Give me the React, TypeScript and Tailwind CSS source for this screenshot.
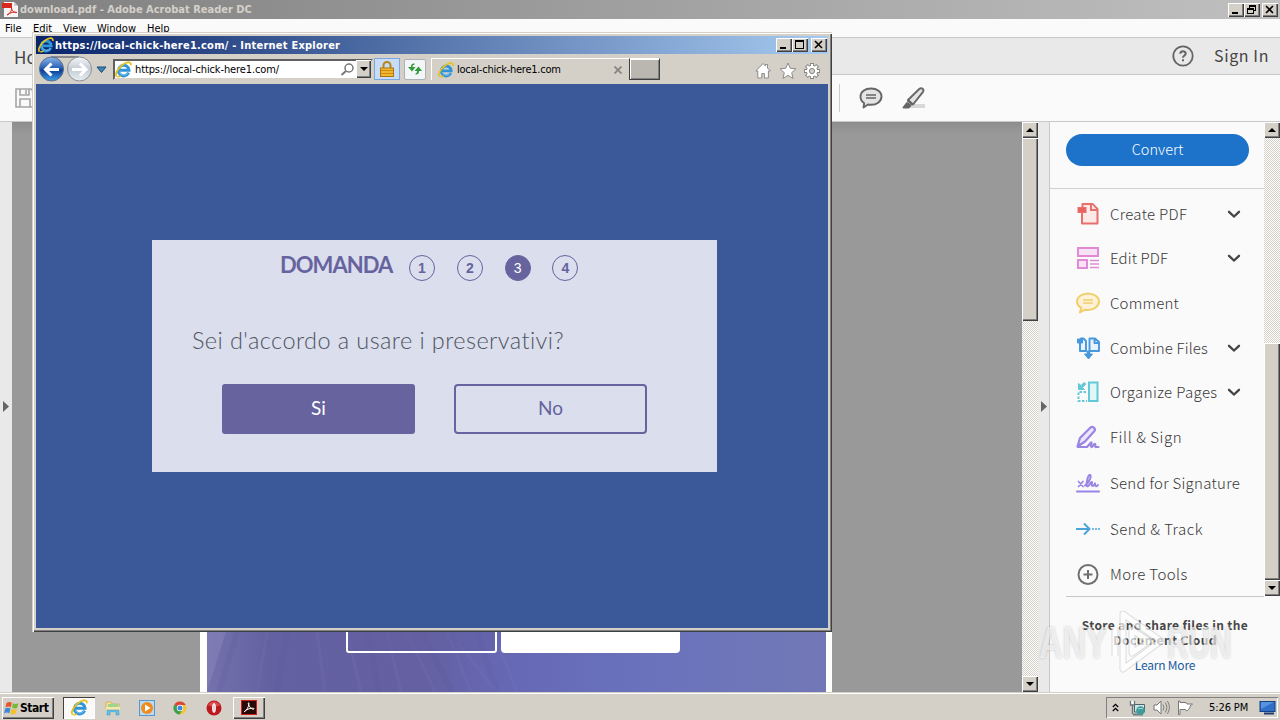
import React from "react";

const bevel =
  "bg-[#d4d0c8] shadow-[inset_1px_1px_0_#ffffff,inset_-1px_-1px_0_#404040,inset_-2px_-2px_0_#808080]";
const tahoma = "font-['DejaVu_Sans_Condensed','DejaVu_Sans',sans-serif] [font-stretch:condensed]";
const clean = "font-['Noto_Sans_CJK_SC','Noto_Sans',sans-serif]";

function IELogo({ size = 16 }: { size?: number }) {
  return (
    <svg width={size} height={size} viewBox="0 0 16 16" fill="none" className="shrink-0">
      <path d="M12.800 11A5 5 0 1 1 13.200 8.800H4.400" stroke="#2f94d8" strokeWidth="2.800" />
      <path d="M12.400 11.200A4.700 4.700 0 0 1 4 10" stroke="#7cc8f4" strokeWidth=".8" />
      <path d="M1.600 14.600C-.8 12.600 3 5.800 8.600 2.600 12 .6 15.400.4 14.800 4" stroke="#e8c21c" strokeWidth="1.700" />
      <path d="M1.800 14.600c1 .7 2.800 0 4-.8" stroke="#e8c21c" strokeWidth="1.200" />
    </svg>
  );
}

function WindowButton({ kind }: { kind: "min" | "max" | "restore" | "close" }) {
  return (
    <div className={`h-[14px] w-4 ${bevel}`}>
      <svg width="16" height="14" viewBox="0 0 16 14" fill="none" stroke="#000" shapeRendering="crispEdges">
        {kind === "min" && <path d="M4 10h6" strokeWidth="2" />}
        {kind === "max" && (
          <>
            <path d="M3.500 3v8M11.500 3v8M3 10.500h9" />
            <path d="M3 3h9" strokeWidth="2" />
          </>
        )}
        {kind === "restore" && (
          <>
            <path d="M5.500 5V2M11.500 2v6M9 7.500h3M3.500 5v6M9.500 5v6M3 10.500h7" />
            <path d="M5 3h7M3 6h7" strokeWidth="2" />
          </>
        )}
        {kind === "close" && <path d="M4 3l7 7M11 3l-7 7" strokeWidth="1.600" shapeRendering="auto" />}
      </svg>
    </div>
  );
}

function ScrollButton({ down = false }: { down?: boolean }) {
  return (
    <div className={`flex h-4 w-4 shrink-0 items-center justify-center ${bevel}`}>
      <svg width="8" height="4" viewBox="0 0 8 4">
        <path d={down ? "M0 0h8L4 4z" : "M0 4h8L4 0z"} />
      </svg>
    </div>
  );
}

const track =
  "bg-[#eae8e4] bg-[repeating-conic-gradient(#ffffff_0_25%,#d4d0c8_0_50%)] bg-[size:2px_2px]";

function Chevron() {
  return (
    <svg width="14" height="9" viewBox="0 0 14 9" fill="none" stroke="#444" strokeWidth="2.300">
      <path d="M2 1.800L7 6.500l5-4.700" strokeLinecap="round" />
    </svg>
  );
}

const toolIcons: Record<string, React.ReactNode> = {
  create: (
    <g stroke="#e8706c" strokeWidth="2" fill="#fbe9e8">
      <path d="M6 9v12.500h15.500V7l-5-5H6.500v4" strokeLinejoin="round" />
      <path d="M15 2v6h6" />
      <rect x="2" y="5.500" width="8" height="5" fill="#e8635f" strokeWidth="1" />
    </g>
  ),
  edit: (
    <g stroke="#e08ad6" strokeWidth="2" fill="#f9e2f6">
      <rect x="2" y="2" width="20" height="8" />
      <rect x="2" y="14" width="9" height="8" />
      <path d="M14 14.500h9M14 18h9M14 21.500h9" strokeWidth="1.300" />
    </g>
  ),
  comment: (
    <g stroke="#f3cd6c" strokeWidth="2" fill="#fdf2d6" strokeLinejoin="round">
      <path d="M12 2.500c6 0 11 3.500 11 8s-5 8.500-11 8.500c-1 0-2 0-3-.3L4 21.500l1.200-4.700C2.500 15.200 1 13 1 10.500c0-4.500 5-8 11-8z" />
      <path d="M7 9h10M7 12h10" strokeWidth="1.300" />
    </g>
  ),
  combine: (
    <g stroke="#4797dc" strokeWidth="1.900" fill="#e6f3fd" strokeLinejoin="round">
      <path d="M4 7v8h6V5L7.500 2.500H5V5" />
      <path d="M13.500 15V2.500H19L23 6v9z M18.500 2.500V7H23" />
      <rect x="1.500" y="3" width="5" height="4" fill="#4797dc" strokeWidth="1" />
      <path d="M12.500 14.500v4" strokeWidth="3.500" />
      <path d="M8.500 18h8l-4 5z" fill="#4797dc" strokeWidth="1" />
    </g>
  ),
  organize: (
    <g stroke="#64c8d6" strokeWidth="2" fill="none">
      <rect x="13" y="2.500" width="8.500" height="18.500" fill="#e0f6f8" />
      <path d="M10 12H2.500v9H11" strokeDasharray="2.500 1.500" />
      <path d="M2.500 3.500v6h6L6.500 7.500 10 4 8 2.500 5 5.500z" fill="#64c8d6" strokeWidth="1" />
    </g>
  ),
  fill: (
    <g stroke="#9a85e4" strokeWidth="2.200" fill="#ebe6fb" strokeLinejoin="round" strokeLinecap="round">
      <path d="M1.500 21.500L4 13 14.500 2.500c2-1.700 5.500 1 4 3.500L9 16.500z" />
      <path d="M2 22h9l4-4.500c1.500-.5-1 4 .5 4.500s2-3.500 3.500-3c1 .5-.5 3.500 1 3h2.500" fill="none" />
    </g>
  ),
  signature: (
    <g stroke="#9a85e4" strokeWidth="2" fill="none" strokeLinecap="round" strokeLinejoin="round">
      <path d="M1 20.500h22" />
      <path d="M2.500 10.500l4.500 5M7 10.500l-4.500 5" strokeWidth="1.700" />
      <path d="M9 14.500c4-2.500 7-9.500 5-10.500-2-.5-3.500 7-3.500 10 0 2.500 2.500 1 4-2 .5-1.500 2-1.500 1.500 0-1 4 1.500 4 3 .5 0 3 1.500 3.500 3 1.500" />
    </g>
  ),
  track: (
    <g stroke="#4aa5d6" strokeWidth="2" fill="none">
      <path d="M0 12h13M8 6.500l5.500 5.500L8 17.500" />
      <path d="M16 12h8" strokeDasharray="2 1" strokeWidth="1.500" />
    </g>
  ),
  more: (
    <g stroke="#6f6f6f" strokeWidth="2" fill="none">
      <circle cx="12" cy="12.500" r="9.500" />
      <path d="M12 8v9M7.500 12.500h9" />
    </g>
  ),
};

const tools = [
  { id: "create", label: "Create PDF", more: true, h: "h-[44px]", tr: "tracking-[0.3px]" },
  { id: "edit", label: "Edit PDF", more: true, h: "h-[44px]", tr: "tracking-[0.1px]" },
  { id: "comment", label: "Comment", more: false, h: "h-[46px]", tr: "tracking-[0.2px]" },
  { id: "combine", label: "Combine Files", more: true, h: "h-[44px]", tr: "tracking-[0.18px]" },
  { id: "organize", label: "Organize Pages", more: true, h: "h-[44px]", tr: "tracking-[0.36px]" },
  { id: "fill", label: "Fill & Sign", more: false, h: "h-[46px]", tr: "tracking-[0.6px]" },
  { id: "signature", label: "Send for Signature", more: false, h: "h-[46px]", tr: "tracking-[0.28px]" },
  { id: "track", label: "Send & Track", more: false, h: "h-[46px]", tr: "tracking-[0.45px]" },
  { id: "more", label: "More Tools", more: false, h: "h-[44px]", tr: "tracking-[0.4px]" },
];

function Sidebar() {
  return (
    <aside className={`flex w-[230px] shrink-0 flex-col bg-[#fafafa] text-[#444] ${clean}`}>
      <div className="flex h-[475px]">
        <div className="flex w-[214px] flex-col">
          <div className="flex h-[67px] items-start border-b border-[#d0d0d0] pl-4 pt-3">
            <button className="flex h-8 w-[183px] items-center justify-center rounded-full bg-[#1d73c9] pb-[1px] text-[14.5px] font-light leading-none tracking-[0px] text-white">
              Convert
            </button>
          </div>
          <div className="flex flex-col pt-[3px]">
            {tools.map((t) => (
              <div key={t.id} className={`flex items-center pl-[26px] pr-[23px] ${t.h}`}>
                <svg width="24" height="24" viewBox="0 0 24 24" className="shrink-0">
                  {toolIcons[t.id]}
                </svg>
                <span
                  className={`mb-[2px] ml-[10px] flex-1 whitespace-nowrap text-[15px] font-light leading-none text-[#383838] ${t.tr}`}
                >
                  {t.label}
                </span>
                {t.more && <Chevron />}
              </div>
            ))}
          </div>
          <div className="ml-4 h-px shrink-0 bg-[#c8c8c8]" />
        </div>
        <div className={`flex h-[474px] w-4 flex-col ${track}`}>
          <ScrollButton />
          <div className="h-[205px]" />
          <div className={`flex-1 ${bevel}`} />
          <ScrollButton down />
        </div>
      </div>
      <div className="flex flex-col items-center pt-[20px] text-center">
        <p className="text-[12px] font-bold leading-[15px] tracking-[0.36px] text-[#484848]">
          Store and share files in the
          <br />
          Document Cloud
        </p>
        <a className="mt-[10px] text-[12px] leading-[16px] tracking-[-0.2px] text-[#1c5a9c]">Learn More</a>
      </div>
    </aside>
  );
}

function PdfPage() {
  return (
    <div className="ml-[188px] mt-[500px] flex h-[70px] w-[632px] bg-white pl-[7px] pr-[6px]">
      <div className="relative flex flex-1 overflow-hidden bg-[linear-gradient(90deg,#7472ad_0%,#6361a0_10%,#6460a2_35%,#6668b4_48%,#6a72bc_70%,#7278b6_100%)]">
        <svg width="619" height="70" viewBox="0 0 619 70" className="absolute inset-0" fill="none">
          <path d="M0 0h22L0 70z" fill="#8580b8" opacity=".6" />
          <g stroke="#8683bd" strokeWidth="3" opacity=".14">
            <path d="M60 10L50 70M110 10l8 60M140 10l14 60M180 10l14 60M200 10l28 60M240 10l24 60M290 20l20 50M250 20l40 50" />
          </g>
          <g stroke="#54528f" strokeWidth="6" opacity=".12">
            <path d="M30 10L12 70M80 10L70 70M160 10l12 60M215 10l30 60M270 10l20 60" />
          </g>
        </svg>
        <div className="relative ml-[139px] h-[31px] w-[151px] rounded-[3px] border-2 border-white bg-[#615fa2]/40" />
        <div className="relative ml-[4px] h-[31px] w-[179px] rounded-[4px] bg-white" />
      </div>
    </div>
  );
}

function Collapse() {
  return (
    <div className="flex shrink-0 items-center justify-center bg-[#e9e9e9] pb-[1px]">
      <svg width="6" height="11" viewBox="0 0 6 11">
        <path d="M0 0l6 5.500L0 11z" fill="#666" />
      </svg>
    </div>
  );
}

function Steps() {
  const base =
    "flex h-[26px] w-[26px] items-center justify-center rounded-full border font-['Liberation_Sans',sans-serif] text-[14px]";
  return (
    <div className="flex pt-[15px] pl-[17px]">
      {[1, 2, 3, 4].map((n) => (
        <div
          key={n}
          className={`${base} mr-[21.800px] ${
            n === 3 ? "border-[#66639e] bg-[#66639e] text-white" : "border-[#66639e] font-bold text-[#66639e]"
          }`}
        >
          {n}
        </div>
      ))}
    </div>
  );
}

function GearIcon() {
  return (
    <svg width="18" height="18" viewBox="0 0 18 18" className="ml-[6px] mt-[3px]">
      <path
        d="M9 1v16M1 9h16M3.300 3.300l11.400 11.400M14.700 3.300L3.300 14.700"
        stroke="#858585"
        strokeWidth="4"
      />
      <circle cx="9" cy="9" r="6" fill="#858585" />
      <path
        d="M9 1.900v14.200M1.900 9h14.200M4 4l10 10M14 4L4 14"
        stroke="#fff"
        strokeWidth="2.200"
      />
      <circle cx="9" cy="9" r="5.200" fill="#fff" />
      <circle cx="9" cy="9" r="2.600" fill="#d4d0c8" stroke="#858585" />
    </svg>
  );
}

function BrowserWindow() {
  return (
    <div className="absolute left-8 top-8 flex h-[600px] w-[800px] flex-col bg-[#d4d0c8] p-1 shadow-[inset_1px_1px_0_#d4d0c8,inset_2px_2px_0_#ffffff,inset_-1px_-1px_0_#404040,inset_-2px_-2px_0_#808080]">
      <div className="flex h-[18px] shrink-0 items-center bg-[linear-gradient(90deg,#0a246a,#a6caf0)] pl-[2px] pr-[1px]">
        <IELogo size={16} />
        <span className={`ml-[1px] flex-1 whitespace-nowrap text-[11px] font-bold leading-none tracking-[0.240px] text-white ${tahoma}`}>
          https://local-chick-here1.com/ - Internet Explorer
        </span>
        <WindowButton kind="min" />
        <WindowButton kind="max" />
        <div className="w-[3px]" />
        <WindowButton kind="close" />
      </div>
      <div className={`flex h-[30px] shrink-0 items-center text-[11px] ${tahoma}`}>
        <svg width="74" height="30" viewBox="0 0 74 30" className="shrink-0">
          <defs>
            <linearGradient id="back" x1="0" y1="0" x2="0" y2="1">
              <stop offset="0" stopColor="#8db4e6" />
              <stop offset=".45" stopColor="#2a62b8" />
              <stop offset=".55" stopColor="#0c3c94" />
              <stop offset="1" stopColor="#3da0ea" />
            </linearGradient>
            <linearGradient id="fwd" x1="0" y1="0" x2="0" y2="1">
              <stop offset="0" stopColor="#f4f6f8" />
              <stop offset=".5" stopColor="#c3ccd4" />
              <stop offset="1" stopColor="#e8eef2" />
            </linearGradient>
          </defs>
          <path d="M15 3h28" stroke="#8a8a8a" strokeWidth="2" />
          <circle cx="15.500" cy="15" r="12" fill="url(#back)" stroke="#5a6e8c" />
          <path d="M9 15.500h14M15.500 9.500l-6 6 6 6" stroke="#fff" strokeWidth="3" fill="none" />
          <circle cx="43.500" cy="15" r="12" fill="url(#fwd)" stroke="#8a9298" />
          <path d="M36 15.500h14M44 9.500l6 6-6 6" stroke="#fff" strokeWidth="3" fill="none" />
          <path d="M61 13h9l-4.500 5.500z" fill="#3a86b4" stroke="#1d4a74" />
        </svg>
        <div className="ml-[3px] flex h-[21px] w-[260px] items-center border-2 border-[#606060] border-b-[#d4d0c8] border-r-[#d4d0c8] bg-white">
          <IELogo size={17} />
          <span className="ml-[3px] flex-1 whitespace-nowrap leading-none tracking-[-0.120px] text-black">
            https://local-chick-here1.com/
          </span>
          <svg width="15" height="15" viewBox="0 0 15 15" fill="none" stroke="#777" strokeWidth="1.500">
            <circle cx="9" cy="6" r="4" />
            <path d="M6 9L1.500 13" strokeWidth="2" />
          </svg>
          <div className={`ml-[1px] flex h-[18px] w-[15px] items-center justify-center ${bevel}`}>
            <svg width="8" height="4" viewBox="0 0 8 4">
              <path d="M0 0h8L4 4z" />
            </svg>
          </div>
        </div>
        <div className="ml-[1px] flex h-[22px] w-[26px] items-center justify-center border border-[#7aa7e0] bg-[#c9dcf5]">
          <svg width="14" height="16" viewBox="0 0 14 16">
            <path d="M3.500 8V4.500a3.500 3.500 0 0 1 7 0V8" fill="none" stroke="#b5851c" strokeWidth="2" />
            <rect x=".5" y="7" width="13" height="8.500" fill="#f2b632" stroke="#a9770f" />
            <path d="M1 9.500h12M1 12.500h12" stroke="#c98d17" />
          </svg>
        </div>
        <div className="ml-[4px] flex h-[21px] w-[22px] items-center justify-center rounded-[2px] border border-[#aab2b8] bg-[#f3f5f7]">
          <svg width="16" height="14" viewBox="0 0 16 14" fill="#2f9a3c">
            <path d="M7.500 1.500C4.500 1.500 4 3 4 5H1l4 4.500L8.500 5h-3c0-1.500.5-2.300 2-2.300z" />
            <path d="M8.500 12.500c3 0 3.500-1.500 3.500-3.500h3L11.500 4.500 7.500 9H10c0 1.500-.3 2.500-1.500 2.500z" />
          </svg>
        </div>
        <div className="ml-[5px] flex h-[22px] w-[198px] items-center border-l border-t border-white pl-[6px]">
          <IELogo size={16} />
          <span className="ml-[3px] flex-1 whitespace-nowrap leading-none tracking-[-0.240px] text-black">
            local-chick-here1.com
          </span>
          <svg width="8" height="8" viewBox="0 0 8 8" className="mr-[7px]" stroke="#858585" strokeWidth="1.800">
            <path d="M.5.5l7 7M7.500.5l-7 7" />
          </svg>
        </div>
        <div className="mb-[1px] h-[22px] w-[31px] border border-[#404040] border-t-white bg-[#bab6b0] shadow-[inset_1px_1px_0_#fff,inset_-1px_-1px_0_#808080]" />
        <svg width="42" height="18" viewBox="0 0 42 18" className="ml-[95px] mt-[3px]" fill="#fff" stroke="#8b8b8b" strokeLinejoin="round">
          <path d="M8 1.500L.8 9h2v7h4v-4.500h2.600V16h4V9h2L12.500 6V2.500h-2V4z" />
          <path d="M33 1l2.300 5.300 5.700.5-4.300 3.900 1.300 5.700-5-3-5 3 1.300-5.700L25 6.800l5.700-.5z" />
        </svg>
        <GearIcon />
      </div>
      <div className="flex-1 bg-[#3b5998] pl-[116px] pt-[156px]">
        <div className="flex h-[232px] w-[565px] flex-col bg-[#dadeed] text-[#66639e] font-['Lato',sans-serif]">
          <div className="flex h-[60px] pl-[128px]">
            <h1 className="w-[112px] whitespace-nowrap pt-[10px] text-[22px] font-bold leading-[29px] tracking-[-0.950px]">
              DOMANDA
            </h1>
            <Steps />
          </div>
          <p className="whitespace-nowrap pl-10 pt-[25px] text-[23.500px] font-light leading-[30px] tracking-[0.420px] text-[#50555f]">
            Sei d'accordo a usare i preservativi?
          </p>
          <div className="flex gap-[39px] pl-[70px] pt-[29px] text-[19px]">
            <button className="h-[50px] w-[193px] rounded-[3px] bg-[#66639e] pb-[1px] text-white">Si</button>
            <button className="h-[50px] w-[193px] rounded-[4px] border-2 border-[#66639e] pb-[1px]">No</button>
          </div>
        </div>
      </div>
    </div>
  );
}

function Taskbar() {
  return (
    <footer
      className={`flex h-7 shrink-0 items-center border-t border-[#d4d0c8] bg-[#d4d0c8] pl-[2px] pt-[2px] shadow-[inset_0_1px_0_#ffffff] ${tahoma}`}
    >
      <div className={`flex h-[22px] w-[52px] items-center pl-[2px] ${bevel}`}>
        <svg width="16" height="16" viewBox="0 0 16 16" className="shrink-0">
          <path d="M2.500 3c2-1.300 3.500-1.300 5.300-.2L6.800 7.300C5 6.300 3.500 6.300 1.500 7.500z" fill="#e8532a" />
          <path d="M8.800 3.200c2 1 3.700 1 5.700-.2l-1.200 4.700c-2 1.200-3.500 1-5.300 0z" fill="#7ab83a" />
          <path d="M1.200 8.600c2-1.200 3.500-1.200 5.300-.2l-1.200 4.800c-1.800-1-3.300-1-5.300.2z" fill="#3f87d8" />
          <path d="M7.500 8.800c2 1 3.500 1.200 5.500 0l-1.200 4.800c-2 1.200-3.700 1.200-5.500.2z" fill="#f4c02c" />
        </svg>
        <span className="text-[12px] font-bold leading-none tracking-[-0.450px]">Start</span>
      </div>
      <div className="ml-[9px] flex h-[22px] w-8 items-center justify-center bg-[#fbfaf9] shadow-[inset_1px_1px_0_#404040,inset_-1px_-1px_0_#fff]">
        <IELogo size={17} />
      </div>
      <svg width="16" height="16" viewBox="0 0 16 16" className="ml-[10px]">
        <path d="M1 2h5l1 2h7v5H1z" fill="#f4e08a" stroke="#c9a94c" strokeWidth=".7" />
        <path d="M3 4h10v4H3z" fill="#9ed48c" />
        <path d="M1 7h14v6H1z" fill="#f7e9a5" />
        <path d="M2 15v-5h12v5h-3v-3H5v3z" fill="#68bce8" stroke="#4a98c8" strokeWidth=".6" />
      </svg>
      <svg width="16" height="16" viewBox="0 0 16 16" className="ml-[18px]">
        <rect x=".5" y=".5" width="15" height="15" fill="#b9dcf6" stroke="#5a96cc" />
        <circle cx="8" cy="8" r="6" fill="#f28a1c" />
        <path d="M6 4.500l5.500 3.500L6 11.500z" fill="#fff" />
      </svg>
      <svg width="14" height="14" viewBox="0 0 14 14" className="ml-[18px]">
        <circle cx="7" cy="7" r="6.500" fill="#f6c52c" />
        <path d="M7 7L1.300 3.700A6.500 6.500 0 0 1 12.700 4H7z" fill="#dd4438" />
        <path d="M7 7L1.300 3.700A6.500 6.500 0 0 0 6.500 13.500L9.500 9z" fill="#3f9f50" />
        <circle cx="7" cy="7" r="3.200" fill="#fff" />
        <circle cx="7" cy="7" r="2.500" fill="#4285e8" />
      </svg>
      <svg width="16" height="16" viewBox="0 0 16 16" className="ml-[19px]">
        <circle cx="8" cy="8" r="7.500" fill="#bc1820" />
        <path d="M2 5a7 7 0 0 1 12 0c-3 2-9 2-12 0z" fill="#e86a6a" opacity=".6" />
        <ellipse cx="8" cy="8" rx="1.900" ry="4.800" fill="#fff" />
        <ellipse cx="8" cy="8" rx=".6" ry="4" fill="#e0b8b8" />
      </svg>
      <div className={`ml-[11px] flex h-[22px] w-8 items-center justify-center ${bevel}`}>
        <svg width="16" height="15" viewBox="0 0 16 15">
          <rect x=".5" y=".5" width="15" height="14" fill="#2a0a08" stroke="#d0201c" />
          <path d="M3 12c2-1 5-5 5-8.500 0-1.200-1-1-.7.2.7 3 3.200 5.800 5.500 5.500 1-.3 0-1.200-2-1S5 9.500 3.500 11.500" fill="none" stroke="#fff" />
        </svg>
      </div>
      <div className="flex-1" />
      <div className="mr-[2px] flex h-[21px] w-[172px] items-center shadow-[inset_1px_1px_0_#808080,inset_-1px_-1px_0_#fff]">
        <svg width="7" height="9" viewBox="0 0 7 9" className="ml-[6px]" fill="none" stroke="#000" strokeWidth="1.300">
          <path d="M.8 4l2.700-2.700L6.200 4M.8 8l2.700-2.700L6.200 8" />
        </svg>
        <svg width="17" height="16" viewBox="0 0 17 16" className="ml-[10px]">
          <path d="M5.500 4.500h10v7.500h-10z" fill="#cfe6ea" stroke="#4c6468" />
          <path d="M4 14.500h10" stroke="#6f8084" strokeWidth="2" />
          <circle cx="11.500" cy="10.500" r="4.300" fill="#3f9c98" />
          <path d="M9 9c2-1 4 0 5-.5" stroke="#a6dfd6" fill="none" />
          <path d="M1.500 1v4h4V1M3.500 5v9" stroke="#66727a" fill="#fff" strokeWidth="1.300" />
        </svg>
        <svg width="17" height="15" viewBox="0 0 17 15" className="ml-[7px]" stroke="#777" fill="none">
          <path d="M1 5h3l4-4v13l-4-4H1z" fill="#fff" />
          <path d="M10 4.500q2 3 0 6M12.200 2.500q3.300 5 0 10M14.400 1q4 6.500 0 13" strokeWidth=".9" />
        </svg>
        <svg width="17" height="15" viewBox="0 0 17 15" className="ml-[7px]" stroke="#777" fill="#fff">
          <path d="M1.500 1v13.500h1.500V9.500h5.500l1 1.500c2-1 3-2 4-5.500 1-.5 2-1 2-1.500H10L9 2.500H3V1z" />
        </svg>
        <span className="ml-[15px] w-[46px] whitespace-nowrap text-[11px] leading-none tracking-[-0.100px]">5:26 PM</span>
        <svg width="17" height="14" viewBox="0 0 17 14" className="ml-[4px]">
          <rect x="1" y=".5" width="15" height="10" fill="#2f6fc8" stroke="#163f84" />
          <path d="M2 1h13L2 8z" fill="#6aa3ea" opacity=".7" />
          <path d="M5 12.500h10" stroke="#1e3c70" strokeWidth="2" />
        </svg>
      </div>
    </footer>
  );
}

function Watermark() {
  return (
    <div className="pointer-events-none absolute left-[1039px] top-[610px] flex h-[64px] w-[196px] items-center font-['Liberation_Sans',sans-serif] text-[45px] font-bold leading-none text-white/65 [text-shadow:0_0_3px_#00000038]">
      <span className="w-[72px] origin-left scale-x-[0.720]">ANY</span>
      <svg width="56" height="62" viewBox="0 0 56 62" fill="none" className="shrink-0 opacity-70" strokeLinejoin="round">
        <path d="M12 3l38 27-38 28zM4 17v28M21 19l17 11-17 12z" stroke="#cfcfcf" strokeWidth="7" />
        <path d="M12 3l38 27-38 28zM4 17v28M21 19l17 11-17 12z" stroke="#fff" strokeWidth="5" />
      </svg>
      <span className="w-[68px] origin-left scale-x-[0.660]">RUN</span>
    </div>
  );
}

export default function App() {
  return (
    <div className="relative flex h-[720px] w-[1280px] flex-col overflow-hidden bg-[#fafafa]">
      <header
        className={`flex h-[19px] shrink-0 items-center bg-[linear-gradient(90deg,#808080,#c0c0c0)] pl-[2px] pr-[2px] ${tahoma}`}
      >
        <svg width="17" height="17" viewBox="0 0 17 17" className="shrink-0">
          <path d="M2 1h10l4 4v11H2z" fill="#f8f4f4" />
          <path d="M12 1v4h4z" fill="#ccc" />
          <path d="M0 2h10v5H0z" fill="#d8281c" />
          <path d="M5 14c3-1 5-5 4.500-7 0 3 3 5 5.500 4.500-3-1-7 0-10 2.500" fill="none" stroke="#d8281c" />
        </svg>
        <span className="ml-[1px] flex-1 whitespace-nowrap text-[11px] font-bold leading-none text-[#d4d0c8]">
          download.pdf - Adobe Acrobat Reader DC
        </span>
        <WindowButton kind="min" />
        <WindowButton kind="restore" />
        <div className="w-[2px]" />
        <WindowButton kind="close" />
      </header>
      <nav
        className={`flex h-[19px] shrink-0 items-center border-b border-[#c8c8c8] pl-[5px] text-[11px] leading-none text-black ${tahoma}`}
      >
        <span className="w-[28px]">File</span>
        <span className="w-[30px]">Edit</span>
        <span className="w-[34px]">View</span>
        <span className="w-[50px]">Window</span>
        <span>Help</span>
      </nav>
      <div
        className={`flex h-[37px] shrink-0 items-center border-b border-[#c8c8c8] bg-[#e9e9e9] pl-[14px] pr-[11px] text-[#444] ${clean}`}
      >
        <span className="flex-1 text-[17px] leading-none">Home</span>
        <svg width="22" height="22" viewBox="0 0 22 22" fill="none" stroke="#666" strokeWidth="1.800">
          <circle cx="11" cy="11" r="9.700" />
          <path d="M8.300 8.800c0-3.300 5.400-3.300 5.400-.2 0 1.900-2.700 2-2.700 4.200M11 14.300v2" strokeWidth="2" />
        </svg>
        <span className="mb-[2px] ml-[20px] whitespace-nowrap text-[16px] leading-none tracking-[0.600px]">Sign In</span>
      </div>
      <div className="flex h-[47px] shrink-0 items-center border-b border-[#c8c8c8] pl-[15px]">
        <svg width="20" height="20" viewBox="0 0 20 20" fill="none" stroke="#a5a5a5" strokeWidth="1.600">
          <path d="M1 1h15l3 3v15H1zM5 1v6h9V1M5 19v-8h10v8M11 2v4" />
        </svg>
        <div className="ml-[804px] h-7 w-px bg-[#ccc]" />
        <svg width="24" height="22" viewBox="0 0 24 22" className="ml-[19px]" fill="#e4e4e4" stroke="#666" strokeWidth="1.900" strokeLinejoin="round">
          <path d="M12 1.500c6 0 10.500 3.300 10.500 8s-4.500 8.300-10.500 8.300c-1.200 0-2-.1-3-.3L4.500 20.500l.7-4.300c-2.500-1.600-3.700-4-3.700-6.700 0-4.700 4.500-8 10.500-8z" />
          <path d="M7 8h10M7 11h10" strokeWidth="1.300" />
        </svg>
        <svg width="24" height="22" viewBox="0 0 24 22" className="ml-[19px]" fill="#e4e4e4" stroke="#666" strokeWidth="1.900" strokeLinejoin="round">
          <path d="M7 17h16v4H7z" fill="#d8d8d8" stroke="none" />
          <path d="M6 13L17.500 1.800c2-1.500 5 .5 3.500 3L11 17.500z" />
          <path d="M5.500 13.500l5 4M1.500 20.500L5 16l3.500 2.500-2 2z" fill="#666" />
        </svg>
      </div>
      <main className="flex h-[570px] shrink-0">
        <div className="flex w-3 shrink-0 bg-[#e9e9e9] pl-[3px]">
          <Collapse />
        </div>
        <div className="w-[1010px] shrink-0 overflow-hidden bg-[linear-gradient(180deg,#8d8d8d,#999999_12px)]">
          <PdfPage />
        </div>
        <div className={`flex w-4 shrink-0 flex-col ${track}`}>
          <ScrollButton />
          <div className={`h-[183px] ${bevel}`} />
          <div className="flex-1" />
          <ScrollButton down />
        </div>
        <div className="flex w-3 shrink-0 border-r border-[#c8c8c8] bg-[#e9e9e9] pl-[3px]">
          <Collapse />
        </div>
        <Sidebar />
      </main>
      <Taskbar />
      <BrowserWindow />
      <Watermark />
    </div>
  );
}
